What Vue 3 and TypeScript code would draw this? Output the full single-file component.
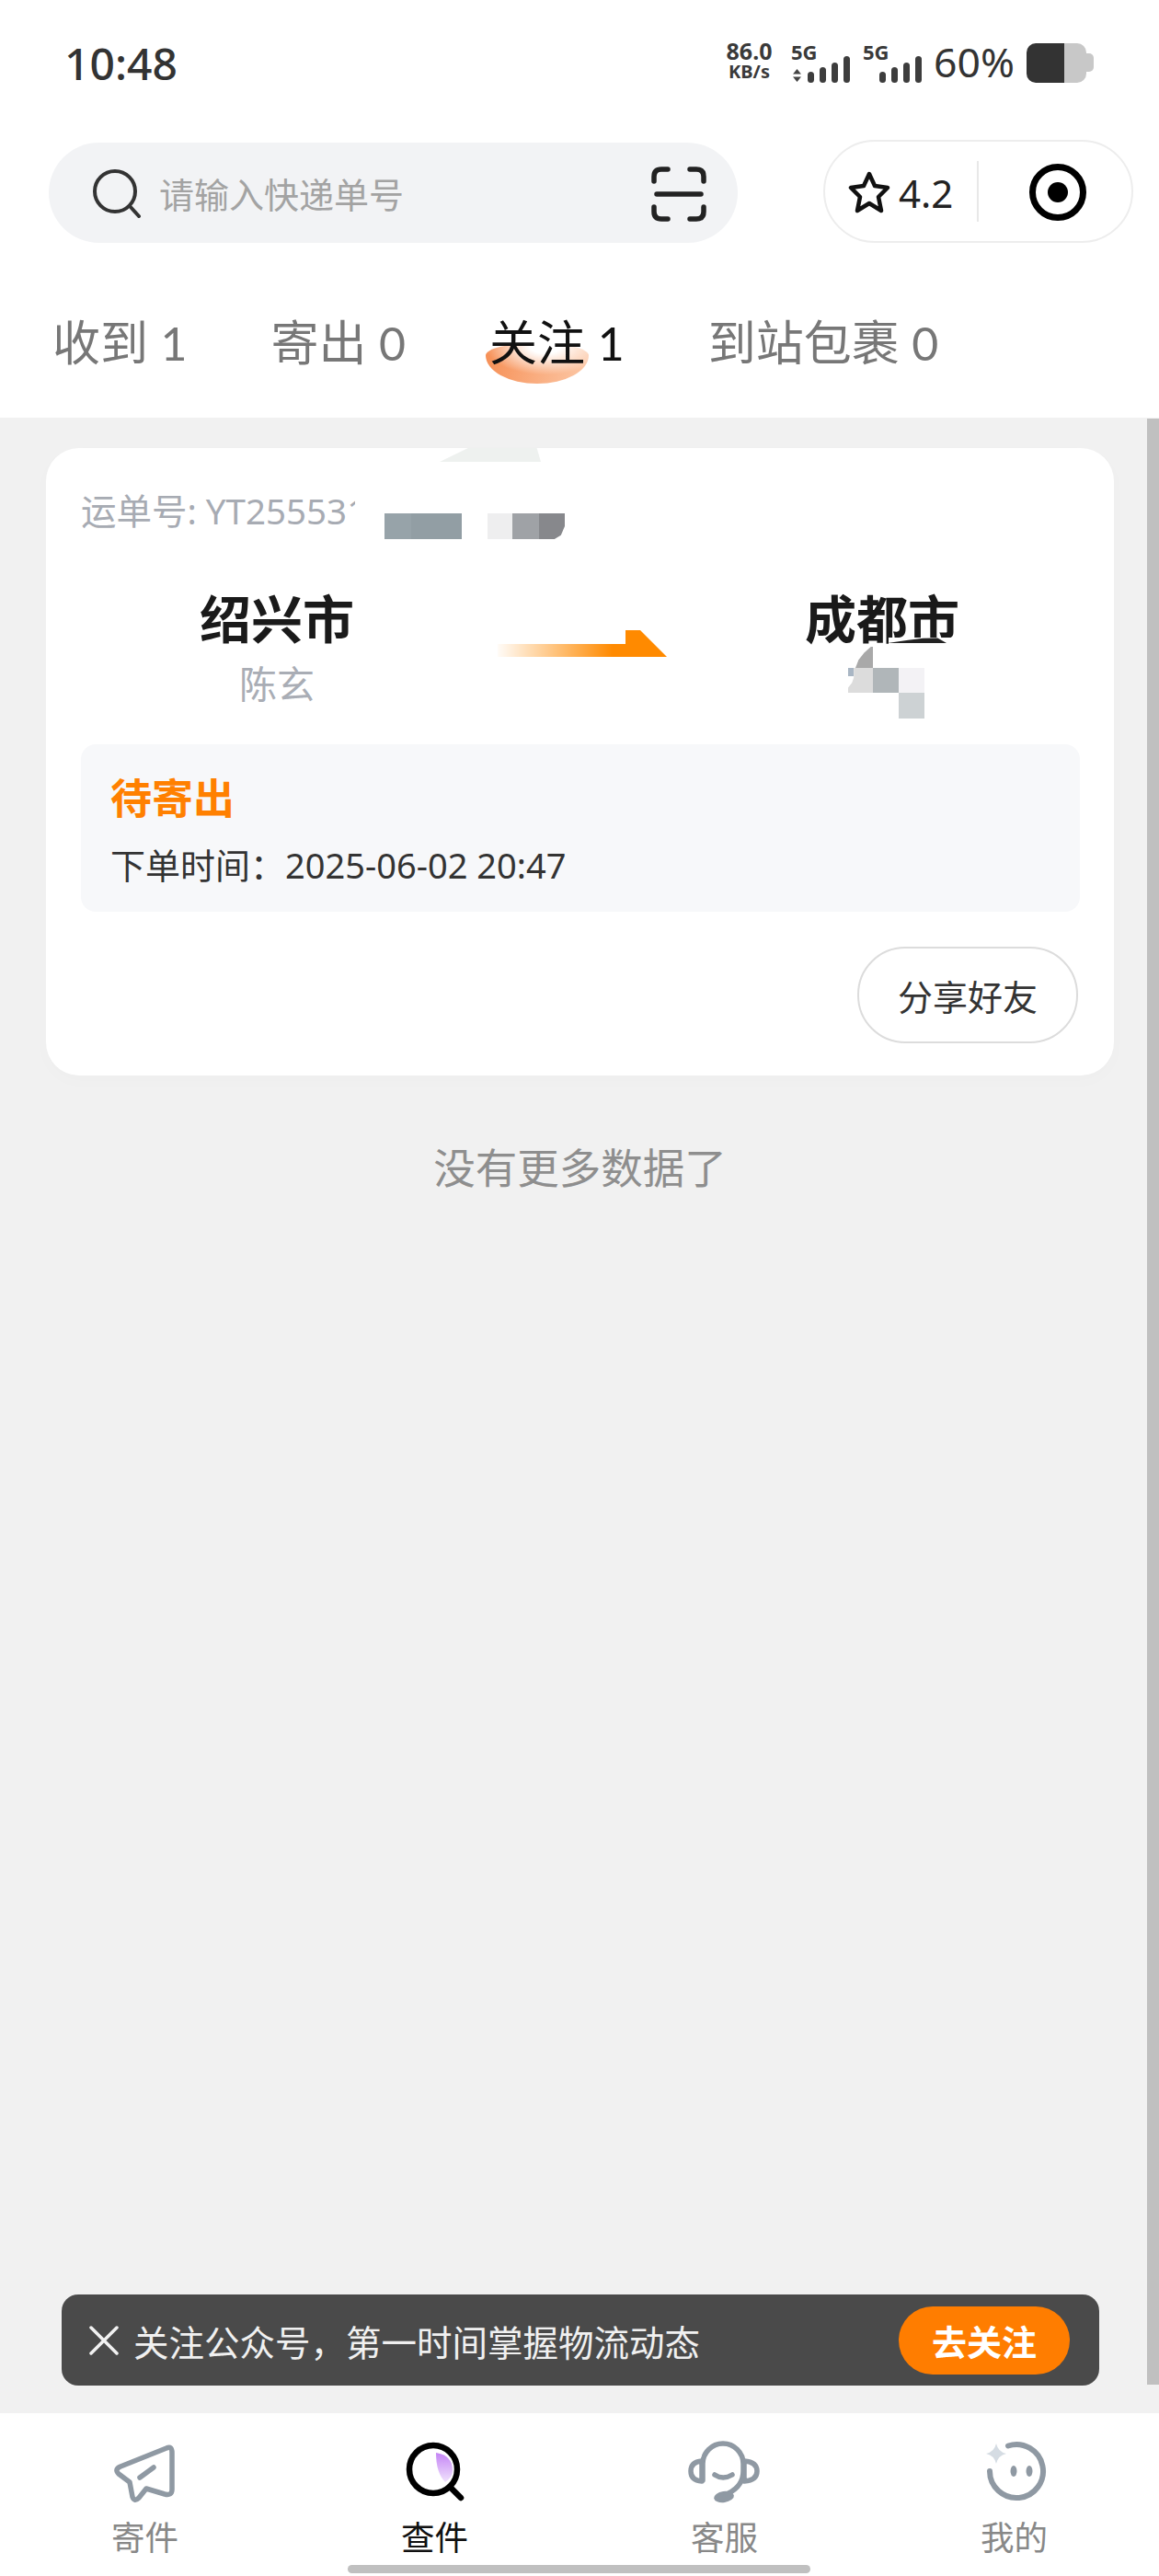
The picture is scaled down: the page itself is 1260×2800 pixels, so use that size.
<template>
  <div class="page">
    <div class="status">
      <span class="time">10:48</span>
      <div class="status-right">
        <div class="net"><span>86.0</span><span class="net-unit">KB/s</span></div>
        <div class="sim sim-one">
          <span class="sim-label">5G</span>
          <svg class="updown" width="11" height="14" viewBox="0 0 11 14"><path d="M5.5 0 10 5.5H1zM5.5 14 1 8.5h9z" fill="#444" /></svg>
          <i v-for="h in bars" :key="h" class="bar" :style="{ height: h + 'px' }"></i>
        </div>
        <div class="sim sim-two">
          <span class="sim-label">5G</span>
          <i v-for="h in bars" :key="h" class="bar" :style="{ height: h + 'px' }"></i>
        </div>
        <span class="percent">60%</span>
        <div class="battery"><i class="battery-fill"></i><i class="battery-rest"></i><i class="battery-nub"></i></div>
      </div>
    </div>

    <div class="top-row">
      <div class="search">
        <svg class="search-icon" width="54" height="54" viewBox="0 0 54 54" fill="none" stroke="#333" stroke-width="4" stroke-linecap="round">
          <circle cx="25" cy="25" r="22" />
          <path d="M41 41 51 52" />
        </svg>
        <span class="search-text">请输入快递单号</span>
        <svg class="scan-icon" width="60" height="60" viewBox="0 0 60 60" fill="none" stroke="#222" stroke-width="5.500" stroke-linecap="round">
          <path d="M3 16V11Q3 3 11 3H18M42 3H49Q57 3 57 11V16M3 44V49Q3 57 11 57H18M42 57H49Q57 57 57 49V44" />
          <path d="M6 30H54" />
        </svg>
      </div>
      <div class="capsule">
        <svg class="star" width="48" height="46" viewBox="0 0 48 46" fill="none" stroke="#111" stroke-width="4.500" stroke-linejoin="round">
          <path d="M24 3 30 16 44 18 34 28 37 43 24 35 11 43 14 28 4 18 18 16Z" />
        </svg>
        <span class="score">4.2</span>
        <i class="capsule-line"></i>
        <svg class="target" width="64" height="64" viewBox="0 0 64 64">
          <circle cx="32" cy="32" r="27.500" fill="none" stroke="#000" stroke-width="7" />
          <circle cx="32" cy="32" r="11" fill="#000" />
        </svg>
      </div>
    </div>

    <div class="tabs">
      <div v-for="tab in tabs" :key="tab.name" class="tab" :class="{ active: tab.active }">
        <span class="tab-text">{{ tab.name }} <span class="tab-count">{{ tab.count }}</span></span>
      </div>
    </div>

    <div class="main">
      <div class="card">
        <i class="smudge"></i>
        <div class="waybill">运单号: YT255531</div>
        <i class="waybill-mask"></i>
        <div class="mosaic-a">
          <i class="a1"></i><i class="a2"></i><i class="a3"></i><i class="a4"></i><i class="a5"></i><i class="a6"></i>
        </div>

        <div class="route">
          <div class="place">
            <div class="city">绍兴市</div>
            <div class="person">陈玄</div>
          </div>
          <svg class="arrow" width="184" height="30" viewBox="0 0 184 30">
            <defs>
              <linearGradient id="arrowFill" x1="0" x2="1" y1="0" y2="0">
                <stop offset="0" stop-color="#ff8a00" stop-opacity="0.03" />
                <stop offset="0.68" stop-color="#ff8a00" />
              </linearGradient>
            </defs>
            <path d="M0 15H139V0H155L184 29H0Z" fill="url(#arrowFill)" />
          </svg>
          <div class="place">
            <div class="city">成都市</div>
          </div>
          <div class="mosaic-b">
            <i class="glitch-mask"></i>
            <i class="glitch"></i>
            <i class="tip"></i>
            <i class="b1"></i><i class="b0"></i><i class="b2"></i><i class="b3"></i><i class="b4"></i>
          </div>
        </div>

        <div class="info">
          <div class="info-state">待寄出</div>
          <div class="info-time">下单时间：2025-06-02 20:47</div>
        </div>

        <div class="actions">
          <div class="share">分享好友</div>
        </div>
      </div>

      <div class="no-more">没有更多数据了</div>

      <i class="scrollbar"></i>

      <div class="toast">
        <svg width="34" height="34" viewBox="0 0 34 34" stroke="#f2f2f2" stroke-width="3.500" stroke-linecap="round">
          <path d="M3 3 31 31M31 3 3 31" />
        </svg>
        <span class="toast-text">关注公众号，第一时间掌握物流动态</span>
        <div class="toast-btn">去关注</div>
      </div>
    </div>

    <div class="nav">
      <div class="nav-item">
        <svg class="nav-icon" width="80" height="70" viewBox="0 0 80 70" fill="none" stroke="#8f99a3" stroke-width="5.500" stroke-linejoin="round" stroke-linecap="round">
          <path d="M63 9 13 29Q6 32 11 37L23 46 26 62Q28 68 33 63L41 53 61 59Q69 61 69 54V14Q69 6 63 9Z" />
          <path d="M34 41 49 30" />
        </svg>
        <span>寄件</span>
      </div>
      <div class="nav-item current">
        <svg class="nav-icon" width="80" height="70" viewBox="0 0 80 70" fill="none">
          <defs>
            <linearGradient id="moonFill" x1="0" x2="0" y1="0" y2="1">
              <stop offset="0" stop-color="#c484f5" />
              <stop offset="1" stop-color="#f0e2fc" />
            </linearGradient>
          </defs>
          <path d="M41 14Q59 17 59 33 59 41 51 46 41 36 41 14Z" fill="url(#moonFill)" />
          <circle cx="38" cy="32" r="26" stroke="#000" stroke-width="6.500" />
          <path d="M56 51 68 63" stroke="#000" stroke-width="6.500" stroke-linecap="round" />
        </svg>
        <span>查件</span>
      </div>
      <div class="nav-item">
        <svg class="nav-icon" width="80" height="70" viewBox="0 0 80 70" fill="none" stroke="#8f99a3" stroke-width="5.500" stroke-linecap="round" stroke-linejoin="round">
          <path d="M16 44V26A22 22 0 0 1 60 26V34Q60 50 44 58" />
          <path d="M15 23Q3 24 3 34 3 44 15 45ZM61 23Q75 24 75 34 75 44 61 45Z" />
          <path d="M29 38Q38 44 48 38" />
          <ellipse cx="39" cy="62" rx="11" ry="6" fill="#8f99a3" stroke="none" transform="rotate(-8 39 62)" />
        </svg>
        <span>客服</span>
      </div>
      <div class="nav-item">
        <svg class="nav-icon" width="80" height="70" viewBox="0 0 80 70" fill="none">
          <path d="M13 34A29 29 0 1 0 33 6.500" stroke="#8f99a3" stroke-width="6" stroke-linecap="round" />
          <ellipse cx="39" cy="34" rx="3.500" ry="6" fill="#8f99a3" />
          <ellipse cx="56" cy="34" rx="3.500" ry="6" fill="#8f99a3" />
          <path d="M20 4Q22 13 31 15 22 17 20 26 18 17 9 15 18 13 20 4Z" fill="#d5dce3" />
        </svg>
        <span>我的</span>
      </div>
      <i class="home-bar"></i>
    </div>
  </div>
</template>

<script setup lang="ts">
interface Tab {
  name: string
  count: number
  active?: boolean
}

const bars: number[] = [12, 17, 22, 29]

const tabs: Tab[] = [
  { name: '收到', count: 1 },
  { name: '寄出', count: 0 },
  { name: '关注', count: 1, active: true },
  { name: '到站包裹', count: 0 }
]
</script>

<style>
html,
body {
  margin: 0;
  background: #fff;
}
</style>

<style scoped>
.page {
  width: 1260px;
  height: 2800px;
  display: flex;
  flex-direction: column;
  background: #fff;
  overflow: hidden;
  font-family: "Noto Sans", "Noto Sans CJK SC", sans-serif;
  color: #222;
}
i {
  display: block;
}

.status {
  height: 136px;
  flex: none;
  display: flex;
  align-items: center;
  justify-content: space-between;
  padding: 0 70px 0 70px;
  box-sizing: border-box;
}
.time {
  font-size: 48px;
  font-weight: 500;
  color: #333;
}
.status-right {
  display: flex;
  align-items: center;
  width: 402px;
  height: 44px;
  color: #3a3a3a;
}
.net {
  display: flex;
  flex-direction: column;
  align-items: center;
  width: 53px;
  font-size: 25px;
  line-height: 25px;
  font-weight: 700;
  margin-top: -5px;
}
.net-unit {
  font-size: 20px;
  line-height: 20px;
}
.sim {
  position: relative;
  display: flex;
  align-items: flex-end;
  justify-content: flex-end;
  gap: 5.500px;
  height: 43px;
}
.sim-one {
  width: 64px;
  margin-left: 19px;
}
.sim-two {
  width: 64px;
  margin-left: 14px;
}
.sim-label {
  position: absolute;
  left: 0;
  top: -3px;
  font-size: 22px;
  line-height: 24px;
  font-weight: 700;
}
.updown {
  position: absolute;
  left: 1px;
  bottom: 1px;
}
.bar {
  width: 7.500px;
  border-radius: 4px;
  background: #3d3d3d;
}
.percent {
  margin-left: 13px;
  font-size: 44.500px;
  line-height: 44px;
  margin-top: -2px;
  color: #333;
}
.battery {
  margin-left: 13px;
  display: flex;
  align-items: center;
  height: 43px;
}
.battery-fill {
  width: 41px;
  height: 43px;
  background: #333;
  border-radius: 10px 0 0 10px;
}
.battery-rest {
  width: 24px;
  height: 43px;
  background: #c8c8c8;
  border-radius: 0 10px 10px 0;
}
.battery-nub {
  width: 8px;
  height: 20px;
  background: #c8c8c8;
  border-radius: 0 5px 5px 0;
}

.top-row {
  flex: none;
  height: 127px;
  display: flex;
  align-items: flex-start;
  justify-content: space-between;
  padding: 16px 28px 0 53px;
  box-sizing: border-box;
}
.search {
  width: 749px;
  height: 109px;
  margin-top: 3px;
  padding: 0 34px 0 47px;
  box-sizing: border-box;
  display: flex;
  align-items: center;
  border-radius: 55px;
  background: #f2f3f5;
}
.search-text {
  margin-left: 19px;
  font-size: 38px;
  color: #a3a3a3;
}
.scan-icon {
  margin: 3px 0 0 auto;
}
.capsule {
  width: 337px;
  height: 112px;
  box-sizing: border-box;
  border: 2px solid #ededed;
  border-radius: 56px;
  display: flex;
  align-items: center;
  padding-left: 24px;
}
.star {
  margin-top: 2px;
}
.score {
  margin-left: 8px;
  font-size: 42px;
  color: #222;
  margin-top: 2px;
}
.capsule-line {
  width: 2px;
  height: 66px;
  margin-left: 26px;
  background: #e8e8e8;
}
.target {
  margin-left: 54px;
  margin-top: 2px;
}

.tabs {
  height: 191px;
  flex: none;
  box-sizing: border-box;
  padding: 79px 0 0 57px;
  display: flex;
  gap: 91px;
}
.tab {
  position: relative;
  height: 60px;
  font-size: 52px;
  line-height: 60px;
  color: #777;
  white-space: nowrap;
}
.tab-text {
  position: relative;
}
.tab-count {
  font-family: Lato, "Noto Sans", sans-serif;
  font-size: 50px;
}
.tab.active {
  color: #111;
}
.tab.active::before {
  content: "";
  position: absolute;
  left: -4px;
  top: 31px;
  width: 112px;
  height: 44px;
  border-radius: 50% 50% 50% 50% / 30% 30% 70% 70%;
  background:
    radial-gradient(ellipse 58% 70% at 58% 8%, #fff 25%, rgba(255, 255, 255, 0) 100%),
    linear-gradient(100deg, #f68f55, #fcc9a8);
}

.main {
  position: relative;
  flex: 1;
  padding: 33px 49px 0 50px;
  background: #f1f1f1;
}
.card {
  position: relative;
  padding: 43px 37px 35px 38px;
  background: #fff;
  border-radius: 36px;
  box-shadow: 0 6px 20px rgba(0, 0, 0, 0.015);
}
.smudge {
  position: absolute;
  left: 428px;
  top: 0;
  width: 110px;
  height: 15px;
  background: #eef1ef;
  clip-path: polygon(28% 0, 96% 0, 100% 100%, 0 100%);
}
.waybill {
  white-space: nowrap;
  font-size: 38.500px;
  line-height: 50px;
  color: #a7abb3;
}
.waybill-mask {
  position: absolute;
  left: 336px;
  top: 40px;
  width: 40px;
  height: 58px;
  background: #fff;
}
.mosaic-a {
  position: absolute;
  left: 368px;
  top: 71px;
  height: 28px;
  display: flex;
}
.a1 { width: 29px; background: #97a3a9; }
.a2 { width: 55px; background: #929ea4; }
.a3 { width: 28px; background: #fff; }
.a4 { width: 27px; background: #eeeeef; }
.a5 { width: 29px; background: #9fa2a6; }
.a6 {
  width: 28px;
  background: #87888c;
  clip-path: polygon(0 0, 100% 0, 100% 50%, 85% 85%, 60% 100%, 0 100%);
}
.route {
  position: relative;
  margin-top: 57px;
  display: grid;
  grid-template-columns: 426px 230px 430px;
}
.place {
  text-align: center;
}
.city {
  font-size: 56px;
  line-height: 70px;
  font-weight: 700;
  color: #1a1a1a;
}
.person {
  margin-top: 11px;
  font-size: 41px;
  line-height: 50px;
  color: #a9adb5;
}
.arrow {
  margin: 48px 0 0 27px;
}
.mosaic-b {
  position: absolute;
  left: 834px;
  top: 66px;
}
.mosaic-b i {
  position: absolute;
  width: 28px;
}
.mosaic-b .glitch-mask {
  left: 44px;
  top: -10px;
  width: 68px;
  height: 14px;
  background: #fff;
}
.mosaic-b .glitch {
  left: 43px;
  top: -11px;
  width: 64px;
  height: 7px;
  background: #222;
  clip-path: polygon(0 100%, 35% 55%, 60% 25%, 85% 20%, 100% 100%);
}
.mosaic-b .tip {
  left: 8px;
  top: 0;
  width: 19px;
  height: 23px;
  background: #a9a9a9;
  clip-path: polygon(100% 0, 88% 0, 50% 28%, 18% 62%, 0 100%, 100% 100%);
}
.mosaic-b .b0 {
  left: 0;
  top: 23px;
  width: 6px;
  height: 9px;
  background: #a9b6c4;
}
.mosaic-b .b1 {
  left: 0;
  top: 23px;
  height: 27px;
  background: #dcdcdc;
  clip-path: polygon(22% 0, 100% 0, 100% 100%, 0 100%, 0 80%, 15% 60%, 22% 40%);
}
.mosaic-b .b2 { left: 27px; top: 23px; height: 27px; background: #b0b6b9; }
.mosaic-b .b3 { left: 55px; top: 23px; height: 27px; background: #f3f2f5; }
.mosaic-b .b4 { left: 55px; top: 50px; height: 28px; background: #cdd2d4; }
.info {
  margin-top: 41px;
  padding: 29px 32px 26px;
  border-radius: 16px;
  background: #f7f8fa;
}
.info-state {
  font-size: 45px;
  line-height: 60px;
  font-weight: 700;
  color: #ff8000;
}
.info-time {
  margin-top: 17px;
  font-size: 38px;
  line-height: 50px;
  color: #333;
}
.actions {
  display: flex;
  justify-content: flex-end;
  margin-top: 38px;
  padding-right: 2px;
}
.share {
  width: 240px;
  height: 105px;
  box-sizing: border-box;
  display: flex;
  align-items: center;
  justify-content: center;
  border: 2px solid #dcdcdc;
  border-radius: 52px;
  font-size: 38px;
  color: #333;
}
.no-more {
  margin-top: 70px;
  text-align: center;
  font-size: 45.500px;
  line-height: 60px;
  color: #8e8e8e;
}
.scrollbar {
  position: absolute;
  right: 0;
  top: 1px;
  bottom: 31px;
  width: 13px;
  background: #c0c0c0;
}
.toast {
  position: absolute;
  left: 67px;
  right: 65px;
  bottom: 30px;
  height: 99px;
  box-sizing: border-box;
  padding: 0 32px 0 29px;
  display: flex;
  align-items: center;
  background: #4a4a4a;
  border-radius: 18px;
}
.toast-text {
  margin-left: 15px;
  font-size: 38.500px;
  color: #f0f0f0;
}
.toast-btn {
  margin-left: auto;
  width: 186px;
  height: 74px;
  display: flex;
  align-items: center;
  justify-content: center;
  border-radius: 37px;
  background: #ff7d00;
  color: #fff;
  font-size: 38px;
  font-weight: 700;
}

.nav {
  position: relative;
  height: 177px;
  flex: none;
  display: grid;
  grid-template-columns: repeat(4, 315px);
  background: #fff;
}
.nav-item {
  display: flex;
  flex-direction: column;
  align-items: center;
  padding-top: 29px;
  font-size: 36.500px;
  line-height: 50px;
  color: #888;
}
.nav-item.current {
  color: #111;
}
.nav-icon {
  display: block;
  margin-bottom: 11px;
}
.home-bar {
  position: absolute;
  left: 378px;
  bottom: 3px;
  width: 503px;
  height: 9px;
  border-radius: 5px;
  background: #c0c0c0;
}
</style>
